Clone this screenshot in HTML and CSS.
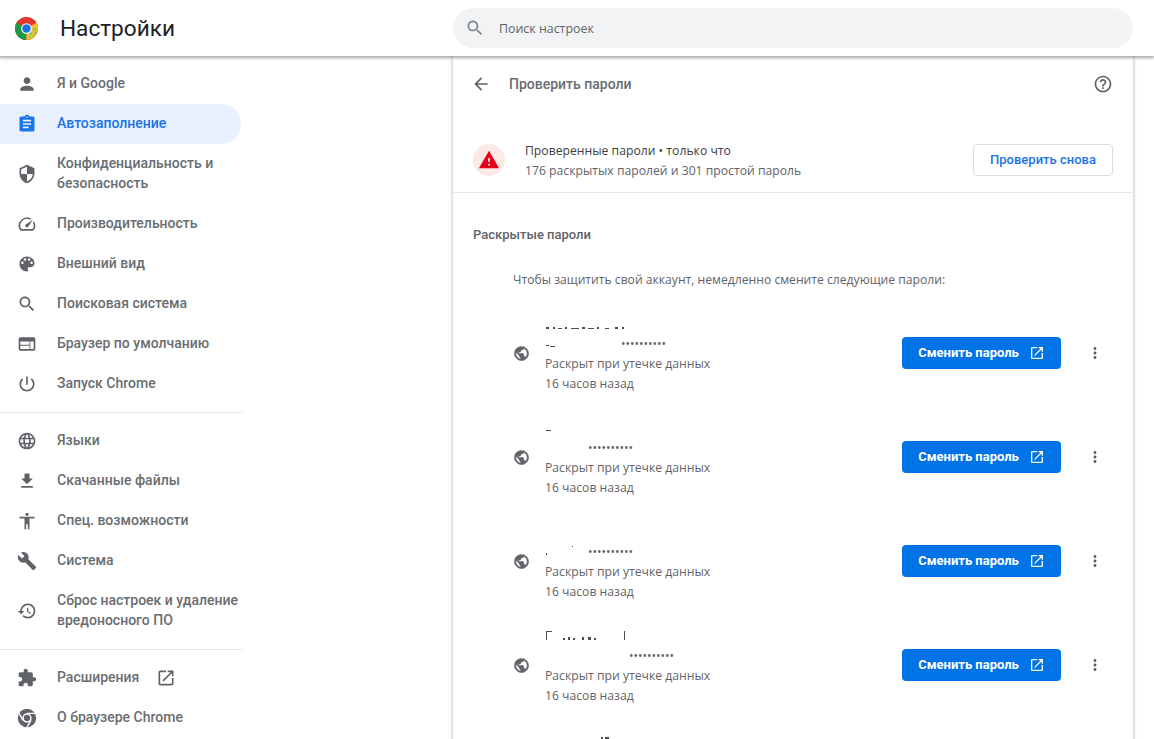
FILE: index.html
```html
<!DOCTYPE html>
<html lang="ru">
<head>
  <meta charset="UTF-8">
  <meta name="viewport" content="width=device-width, initial-scale=1.0">
  <title>Настройки</title>
  <link rel="stylesheet" href="styles.css">
</head>
<body>

  <!-- Toolbar -->
  <header class="toolbar">
    <div class="brand">
      <svg class="logo" viewBox="0 0 24 24">
        <circle cx="12" cy="12" r="12" fill="#e0352b"/>
        <path d="M12 12L1.6 18A12 12 0 0 0 12 24z" fill="#1e9a47"/>
        <path d="M12 12L1.6 18A12 12 0 0 1 1.6 6z" fill="#1e9a47"/>
        <path d="M12 12L12 24A12 12 0 0 0 22.4 6z" fill="#f5c02c"/>
        <path d="M15 17l2-1 1 1-2 2zM19 12l3 0 0 2-3 0zM14 21l2-1 1 1-2 1zM20 16l2-1 0 2-1 1zM18 20l2-1 0 1-1 1z" fill="#3fd08a"/>
        <circle cx="12" cy="12" r="5.6" fill="#fff"/>
        <circle cx="12" cy="12" r="4.4" fill="#1a73e8"/>
      </svg>
      <h1>Настройки</h1>
    </div>
    <div class="search">
      <svg class="icon search-icon" viewBox="0 0 24 24"><path d="M15.5 14h-.79l-.28-.27C15.41 12.59 16 11.11 16 9.5 16 5.91 13.09 3 9.5 3S3 5.91 3 9.5 5.91 16 9.5 16c1.61 0 3.09-.59 4.23-1.57l.27.28v.79l5 4.99L20.49 19l-4.99-5zm-6 0C7.01 14 5 11.99 5 9.5S7.01 5 9.5 5 14 7.01 14 9.5 11.99 14 9.5 14z"/></svg>
      <span>Поиск настроек</span>
    </div>
  </header>

  <div class="layout">

    <!-- Sidebar -->
    <nav class="sidebar">
      <a class="nav-item">
        <svg class="icon" viewBox="0 0 24 24"><path d="M12 12c2.21 0 4-1.79 4-4s-1.79-4-4-4-4 1.79-4 4 1.79 4 4 4zm0 2c-2.67 0-8 1.34-8 4v2h16v-2c0-2.66-5.33-4-8-4z"/></svg>
        <span>Я и Google</span>
      </a>
      <a class="nav-item active">
        <svg class="icon" viewBox="0 0 24 24"><path d="M19 3h-4.18C14.4 1.84 13.3 1 12 1c-1.3 0-2.4.84-2.82 2H5c-1.1 0-2 .9-2 2v14c0 1.1.9 2 2 2h14c1.1 0 2-.9 2-2V5c0-1.1-.9-2-2-2zm-7 0c.55 0 1 .45 1 1s-.45 1-1 1-1-.45-1-1 .45-1 1-1zm2 14H7v-2h7v2zm3-4H7v-2h10v2zm0-4H7V7h10v2z"/></svg>
        <span>Автозаполнение</span>
      </a>
      <a class="nav-item tall">
        <svg class="icon" viewBox="0 0 24 24"><path d="M12 1L3 5v6c0 5.55 3.84 10.74 9 12 5.16-1.26 9-6.45 9-12V5l-9-4zm0 10.99h7c-.53 4.12-3.28 7.79-7 8.94V12H5V6.3l7-3.11v8.8z"/></svg>
        <span>Конфиденциальность и безопасность</span>
      </a>
      <a class="nav-item">
        <svg class="icon" viewBox="0 0 24 24"><path d="M20.38 8.57l-1.23 1.85a8 8 0 0 1-.22 7.58H5.07A8 8 0 0 1 15.58 6.85l1.85-1.23A10 10 0 0 0 3.35 19a2 2 0 0 0 1.72 1h13.85a2 2 0 0 0 1.74-1 10 10 0 0 0-.27-10.44zm-9.79 6.84a2 2 0 0 0 2.83 0l5.66-8.49-8.49 5.66a2 2 0 0 0 0 2.83z"/></svg>
        <span>Производительность</span>
      </a>
      <a class="nav-item">
        <svg class="icon" viewBox="0 0 24 24"><path d="M12 3c-4.97 0-9 4.03-9 9s4.03 9 9 9c.83 0 1.5-.67 1.5-1.5 0-.39-.15-.74-.39-1.01-.23-.26-.38-.61-.38-.99 0-.83.67-1.5 1.5-1.5H16c2.76 0 5-2.24 5-5 0-4.42-4.03-8-9-8zm-5.5 9c-.83 0-1.5-.67-1.5-1.5S5.67 9 6.5 9 8 9.67 8 10.5 7.33 12 6.5 12zm3-4C8.67 8 8 7.33 8 6.5S8.67 5 9.5 5s1.5.67 1.5 1.5S10.33 8 9.5 8zm5 0c-.83 0-1.5-.67-1.5-1.5S13.67 5 14.5 5s1.5.67 1.5 1.5S15.33 8 14.5 8zm3 4c-.83 0-1.5-.67-1.5-1.5S16.67 9 17.5 9s1.5.67 1.5 1.5-.67 1.5-1.5 1.5z"/></svg>
        <span>Внешний вид</span>
      </a>
      <a class="nav-item">
        <svg class="icon" viewBox="0 0 24 24"><path d="M15.5 14h-.79l-.28-.27C15.41 12.59 16 11.11 16 9.5 16 5.91 13.09 3 9.5 3S3 5.91 3 9.5 5.91 16 9.5 16c1.61 0 3.09-.59 4.23-1.57l.27.28v.79l5 4.99L20.49 19l-4.99-5zm-6 0C7.01 14 5 11.99 5 9.5S7.01 5 9.5 5 14 7.01 14 9.5 11.99 14 9.5 14z"/></svg>
        <span>Поисковая система</span>
      </a>
      <a class="nav-item">
        <svg class="icon" viewBox="0 0 24 24"><path d="M20 4H4c-1.1 0-1.99.9-1.99 2L2 18c0 1.1.9 2 2 2h16c1.1 0 2-.9 2-2V6c0-1.1-.9-2-2-2zm-5 14H4v-4h11v4zm0-5H4V9h11v4zm5 5h-4V9h4v9z"/></svg>
        <span>Браузер по умолчанию</span>
      </a>
      <a class="nav-item">
        <svg class="icon" viewBox="0 0 24 24"><path d="M13 3h-2v10h2V3zm4.83 2.17l-1.42 1.42C17.99 7.86 19 9.81 19 12c0 3.87-3.13 7-7 7s-7-3.13-7-7c0-2.19 1.01-4.14 2.58-5.42L6.17 5.17C4.23 6.82 3 9.26 3 12c0 4.97 4.03 9 9 9s9-4.03 9-9c0-2.74-1.23-5.18-3.17-6.83z"/></svg>
        <span>Запуск Chrome</span>
      </a>

      <div class="nav-sep"></div>

      <a class="nav-item">
        <svg class="icon" viewBox="0 0 24 24"><path d="M11.99 2C6.47 2 2 6.48 2 12s4.47 10 9.99 10C17.52 22 22 17.52 22 12S17.52 2 11.99 2zm6.93 6h-2.95c-.32-1.25-.78-2.45-1.38-3.56 1.84.63 3.37 1.91 4.33 3.56zM12 4.04c.83 1.2 1.48 2.53 1.91 3.96h-3.82c.43-1.43 1.08-2.76 1.91-3.96zM4.26 14C4.1 13.36 4 12.69 4 12s.1-1.36.26-2h3.38c-.08.66-.14 1.32-.14 2 0 .68.06 1.34.14 2H4.26zm.82 2h2.95c.32 1.25.78 2.45 1.38 3.56-1.84-.63-3.37-1.9-4.33-3.56zm2.95-8H5.08c.96-1.66 2.49-2.93 4.33-3.56C8.81 5.55 8.35 6.75 8.03 8zM12 19.96c-.83-1.2-1.48-2.53-1.91-3.96h3.82c-.43 1.43-1.08 2.76-1.91 3.96zM14.34 14H9.66c-.09-.66-.16-1.32-.16-2 0-.68.07-1.35.16-2h4.68c.09.65.16 1.32.16 2 0 .68-.07 1.34-.16 2zm.25 5.56c.6-1.11 1.06-2.31 1.38-3.56h2.95c-.96 1.65-2.49 2.93-4.33 3.56zM16.36 14c.08-.66.14-1.32.14-2 0-.68-.06-1.34-.14-2h3.38c.16.64.26 1.31.26 2s-.1 1.36-.26 2h-3.38z"/></svg>
        <span>Языки</span>
      </a>
      <a class="nav-item">
        <svg class="icon" viewBox="0 0 24 24"><path d="M19 9h-4V3H9v6H5l7 7 7-7zM5 18v2h14v-2H5z"/></svg>
        <span>Скачанные файлы</span>
      </a>
      <a class="nav-item">
        <svg class="icon" viewBox="0 0 24 24"><path d="M12 2c1.1 0 2 .9 2 2s-.9 2-2 2-2-.9-2-2 .9-2 2-2zm9 7h-6v13h-2v-6h-2v6H9V9H3V7h18v2z"/></svg>
        <span>Спец. возможности</span>
      </a>
      <a class="nav-item">
        <svg class="icon" viewBox="0 0 24 24"><path d="M22.7 19l-9.1-9.1c.9-2.3.4-5-1.5-6.9-2-2-5-2.4-7.4-1.3L9 6 6 9 1.6 4.7C.4 7.1.9 10.1 2.9 12.1c1.9 1.9 4.6 2.4 6.9 1.5l9.1 9.1c.4.4 1 .4 1.4 0l2.3-2.3c.5-.4.5-1.1.1-1.4z"/></svg>
        <span>Система</span>
      </a>
      <a class="nav-item tall">
        <svg class="icon" viewBox="0 0 24 24"><path d="M13 3c-4.97 0-9 4.03-9 9H1l3.89 3.89.07.14L9 12H6c0-3.87 3.13-7 7-7s7 3.13 7 7-3.13 7-7 7c-1.93 0-3.68-.79-4.94-2.06l-1.42 1.42C8.27 19.99 10.51 21 13 21c4.97 0 9-4.03 9-9s-4.03-9-9-9zm-1 5v5l4.28 2.54.72-1.21-3.5-2.08V8H12z"/></svg>
        <span>Сброс настроек и удаление вредоносного ПО</span>
      </a>

      <div class="nav-sep"></div>

      <a class="nav-item">
        <svg class="icon" viewBox="0 0 24 24"><path d="M20.5 11H19V7c0-1.1-.9-2-2-2h-4V3.5C13 2.12 11.88 1 10.5 1S8 2.12 8 3.5V5H4c-1.1 0-1.99.9-1.99 2v3.8H3.5c1.49 0 2.7 1.21 2.7 2.7s-1.21 2.7-2.7 2.7H2V20c0 1.1.9 2 2 2h3.8v-1.5c0-1.49 1.21-2.7 2.7-2.7 1.49 0 2.7 1.21 2.7 2.7V22H17c1.1 0 2-.9 2-2v-4h1.5c1.38 0 2.5-1.12 2.5-2.5S21.88 11 20.5 11z"/></svg>
        <span>Расширения</span>
        <svg class="icon ext-link" viewBox="0 0 24 24"><path d="M19 19H5V5h7V3H5c-1.11 0-2 .9-2 2v14c0 1.1.89 2 2 2h14c1.1 0 2-.9 2-2v-7h-2v7zM14 3v2h3.59l-9.83 9.83 1.41 1.41L19 6.41V10h2V3h-7z"/></svg>
      </a>
      <a class="nav-item">
        <svg class="icon" viewBox="0 0 24 24">
          <circle cx="12" cy="12" r="11"/>
          <circle class="cut" cx="12" cy="12" r="5.6"/>
          <circle cx="12" cy="12" r="3.8"/>
          <path class="swirl" d="M12 6.4H21.5M7.2 14.8L2.6 6.6M16.8 14.8L12 23"/>
        </svg>
        <span>О браузере Chrome</span>
      </a>
    </nav>

    <!-- Password check card -->
    <main class="card">
      <div class="card-head">
        <svg class="icon head-icon" viewBox="0 0 24 24"><path d="M20 11H7.83l5.59-5.59L12 4l-8 8 8 8 1.41-1.41L7.83 13H20v-2z"/></svg>
        <h2>Проверить пароли</h2>
        <svg class="icon help-icon" viewBox="0 0 24 24"><path d="M11 18h2v-2h-2v2zm1-16C6.48 2 2 6.48 2 12s4.48 10 10 10 10-4.48 10-10S17.52 2 12 2zm0 18c-4.41 0-8-3.59-8-8s3.59-8 8-8 8 3.59 8 8-3.59 8-8 8zm0-14c-2.21 0-4 1.79-4 4h2c0-1.1.9-2 2-2s2 .9 2 2c0 2-3 1.75-3 5h2c0-2.25 3-2.5 3-5 0-2.21-1.79-4-4-4z"/></svg>
      </div>

      <div class="status">
        <div class="status-badge">
          <svg viewBox="0 0 24 24"><path d="M1 21h22L12 2 1 21zm12-3h-2v-2h2v2zm0-4h-2v-4h2v4z"/></svg>
        </div>
        <div class="status-text">
          <div class="status-title">Проверенные пароли • только что</div>
          <div>176 раскрытых паролей и 301 простой пароль</div>
        </div>
        <button class="btn-outline">Проверить снова</button>
      </div>

      <h3 class="section-title">Раскрытые пароли</h3>
      <p class="section-note">Чтобы защитить свой аккаунт, немедленно смените следующие пароли:</p>

      <div class="row">
        <svg class="icon globe" viewBox="0 0 24 24"><path d="M12 2C6.48 2 2 6.48 2 12s4.48 10 10 10 10-4.48 10-10S17.52 2 12 2zm-1 17.93c-3.95-.49-7-3.85-7-7.93 0-.62.08-1.21.21-1.79L9 15v1c0 1.1.9 2 2 2v1.93zm6.9-2.54c-.26-.81-1-1.39-1.9-1.39h-1v-3c0-.55-.45-1-1-1H8v-2h2c.55 0 1-.45 1-1V7h2c1.1 0 2-.9 2-2v-.41c2.93 1.19 5 4.06 5 7.41 0 2.08-.8 3.97-2.1 5.39z"/></svg>
        <div class="row-text">
          <!-- site and login are painted out in the source, only scraps remain -->
          <div class="line site">
            <svg class="scraps" width="90" height="20"><path d="M1 13h3v2H1zM8 13h2v2H8zM13 14h4v1h-4zM20 13h2v2h-2zM26 14h8v1h-8zM37 13h3v2h-3zM43 14h6v1h-6zM52 13h2v2h-2zM60 14h4v1h-4zM70 13h3v2h-3zM77 13h2v2h-2z"/></svg>
          </div>
          <div class="line login">
            <svg class="scraps" width="12" height="20"><path d="M1 11h3v1H1zM5 12h5v1H5z"/></svg>
            <span class="dots offset-76">••••••••••</span>
          </div>
          <div class="line">Раскрыт при утечке данных</div>
          <div class="line">16 часов назад</div>
        </div>
        <button class="btn-change">Сменить пароль
          <svg viewBox="0 0 24 24"><path d="M19 19H5V5h7V3H5c-1.11 0-2 .9-2 2v14c0 1.1.89 2 2 2h14c1.1 0 2-.9 2-2v-7h-2v7zM14 3v2h3.59l-9.83 9.83 1.41 1.41L19 6.41V10h2V3h-7z"/></svg>
        </button>
        <svg class="icon more" viewBox="0 0 24 24"><path d="M12 8c1.1 0 2-.9 2-2s-.9-2-2-2-2 .9-2 2 .9 2 2 2zm0 2c-1.1 0-2 .9-2 2s.9 2 2 2 2-.9 2-2-.9-2-2-2zm0 6c-1.1 0-2 .9-2 2s.9 2 2 2 2-.9 2-2-.9-2-2-2z"/></svg>
      </div>

      <div class="row">
        <svg class="icon globe" viewBox="0 0 24 24"><path d="M12 2C6.48 2 2 6.48 2 12s4.48 10 10 10 10-4.48 10-10S17.52 2 12 2zm-1 17.93c-3.95-.49-7-3.85-7-7.93 0-.62.08-1.21.21-1.79L9 15v1c0 1.1.9 2 2 2v1.93zm6.9-2.54c-.26-.81-1-1.39-1.9-1.39h-1v-3c0-.55-.45-1-1-1H8v-2h2c.55 0 1-.45 1-1V7h2c1.1 0 2-.9 2-2v-.41c2.93 1.19 5 4.06 5 7.41 0 2.08-.8 3.97-2.1 5.39z"/></svg>
        <div class="row-text">
          <div class="line site">
            <svg class="scraps" width="12" height="20"><path d="M1 12h5v1H1z"/></svg>
          </div>
          <div class="line login"><span class="dots offset-43">••••••••••</span></div>
          <div class="line">Раскрыт при утечке данных</div>
          <div class="line">16 часов назад</div>
        </div>
        <button class="btn-change">Сменить пароль
          <svg viewBox="0 0 24 24"><path d="M19 19H5V5h7V3H5c-1.11 0-2 .9-2 2v14c0 1.1.89 2 2 2h14c1.1 0 2-.9 2-2v-7h-2v7zM14 3v2h3.59l-9.83 9.83 1.41 1.41L19 6.41V10h2V3h-7z"/></svg>
        </button>
        <svg class="icon more" viewBox="0 0 24 24"><path d="M12 8c1.1 0 2-.9 2-2s-.9-2-2-2-2 .9-2 2 .9 2 2 2zm0 2c-1.1 0-2 .9-2 2s.9 2 2 2 2-.9 2-2-.9-2-2-2zm0 6c-1.1 0-2 .9-2 2s.9 2 2 2 2-.9 2-2-.9-2-2-2z"/></svg>
      </div>

      <div class="row">
        <svg class="icon globe" viewBox="0 0 24 24"><path d="M12 2C6.48 2 2 6.48 2 12s4.48 10 10 10 10-4.48 10-10S17.52 2 12 2zm-1 17.93c-3.95-.49-7-3.85-7-7.93 0-.62.08-1.21.21-1.79L9 15v1c0 1.1.9 2 2 2v1.93zm6.9-2.54c-.26-.81-1-1.39-1.9-1.39h-1v-3c0-.55-.45-1-1-1H8v-2h2c.55 0 1-.45 1-1V7h2c1.1 0 2-.9 2-2v-.41c2.93 1.19 5 4.06 5 7.41 0 2.08-.8 3.97-2.1 5.39z"/></svg>
        <div class="row-text">
          <div class="line site"></div>
          <div class="line login">
            <svg class="scraps" width="32" height="20"><path d="M27 4h1v1h-1zM1 11h1v2H1z"/></svg>
            <span class="dots offset-43">••••••••••</span>
          </div>
          <div class="line">Раскрыт при утечке данных</div>
          <div class="line">16 часов назад</div>
        </div>
        <button class="btn-change">Сменить пароль
          <svg viewBox="0 0 24 24"><path d="M19 19H5V5h7V3H5c-1.11 0-2 .9-2 2v14c0 1.1.89 2 2 2h14c1.1 0 2-.9 2-2v-7h-2v7zM14 3v2h3.59l-9.83 9.83 1.41 1.41L19 6.41V10h2V3h-7z"/></svg>
        </button>
        <svg class="icon more" viewBox="0 0 24 24"><path d="M12 8c1.1 0 2-.9 2-2s-.9-2-2-2-2 .9-2 2 .9 2 2 2zm0 2c-1.1 0-2 .9-2 2s.9 2 2 2 2-.9 2-2-.9-2-2-2zm0 6c-1.1 0-2 .9-2 2s.9 2 2 2 2-.9 2-2-.9-2-2-2z"/></svg>
      </div>

      <div class="row">
        <svg class="icon globe" viewBox="0 0 24 24"><path d="M12 2C6.48 2 2 6.48 2 12s4.48 10 10 10 10-4.48 10-10S17.52 2 12 2zm-1 17.93c-3.95-.49-7-3.85-7-7.93 0-.62.08-1.21.21-1.79L9 15v1c0 1.1.9 2 2 2v1.93zm6.9-2.54c-.26-.81-1-1.39-1.9-1.39h-1v-3c0-.55-.45-1-1-1H8v-2h2c.55 0 1-.45 1-1V7h2c1.1 0 2-.9 2-2v-.41c2.93 1.19 5 4.06 5 7.41 0 2.08-.8 3.97-2.1 5.39z"/></svg>
        <div class="row-text">
          <div class="line site">
            <svg class="scraps" width="90" height="20"><path d="M1 5h6v1H1zM1 5h1v9H1zM18 12h2v2h-2zM23 11h2v3h-2zM28 12h2v2h-2zM37 11h2v3h-2zM43 11h3v3h-3zM49 12h2v2h-2zM79 5h1v9h-1z"/></svg>
          </div>
          <div class="line login"><span class="dots offset-84">••••••••••</span></div>
          <div class="line">Раскрыт при утечке данных</div>
          <div class="line">16 часов назад</div>
        </div>
        <button class="btn-change">Сменить пароль
          <svg viewBox="0 0 24 24"><path d="M19 19H5V5h7V3H5c-1.11 0-2 .9-2 2v14c0 1.1.89 2 2 2h14c1.1 0 2-.9 2-2v-7h-2v7zM14 3v2h3.59l-9.83 9.83 1.41 1.41L19 6.41V10h2V3h-7z"/></svg>
        </button>
        <svg class="icon more" viewBox="0 0 24 24"><path d="M12 8c1.1 0 2-.9 2-2s-.9-2-2-2-2 .9-2 2 .9 2 2 2zm0 2c-1.1 0-2 .9-2 2s.9 2 2 2 2-.9 2-2-.9-2-2-2zm0 6c-1.1 0-2 .9-2 2s.9 2 2 2 2-.9 2-2-.9-2-2-2z"/></svg>
      </div>

      <div class="row-tail">
        <svg class="scraps" width="70" height="6"><path d="M56 0h2v2h-2zM60 0h4v2h-4z"/></svg>
      </div>
    </main>
  </div>

</body>
</html>
```

FILE: styles.css
```css
/* General */
html, body {
  height: 100%;
}

body {
  margin: 0;
  background: #ffffff;
  color: #5f6368;
  font-family: Roboto, Arial, sans-serif;
  font-size: 13px;
  overflow: hidden;
}

.icon {
  width: 20px;
  height: 20px;
  flex: none;
  fill: #5f6368;
}

/* Toolbar */
.toolbar {
  position: relative;
  z-index: 5;
  display: flex;
  align-items: center;
  height: 56px;
  background: #ffffff;
  box-shadow: 0 1px 3px 1px rgba(60, 64, 67, 0.45);
}

.brand {
  display: flex;
  align-items: center;
  width: 453px;
  padding-left: 15px;
  box-sizing: border-box;
}

.logo {
  width: 23px;
  height: 23px;
  flex: none;
}

.brand h1 {
  margin: 0 0 0 22px;
  color: #202124;
  font-size: 22.6px;
  font-weight: 400;
}

.search {
  display: flex;
  align-items: center;
  width: 680px;
  height: 40px;
  border-radius: 20px;
  background: #f1f3f4;
  color: #5f6368;
  font-family: "Open Sans", Arial, sans-serif;
  font-size: 12.4px;
}

.search-icon {
  margin: 0 14px 0 12px;
  fill: #80868b;
}

/* Sidebar */
.layout {
  display: flex;
  align-items: flex-start;
}

.sidebar {
  flex: none;
  width: 243px;
  padding-top: 8px;
  color: #696d71;
  font-size: 14px;
  font-weight: 500;
}

.nav-item {
  display: flex;
  align-items: center;
  gap: 20px;
  width: 241px;
  height: 40px;
  padding-left: 17px;
  box-sizing: border-box;
  border-radius: 0 20px 20px 0;
  line-height: 20px;
}

.nav-item span {
  margin-top: -2px;
}

.nav-item.tall {
  height: 60px;
}

.nav-item.active {
  background: #e8f0fe;
  color: #1a73e8;
}

.nav-item.active .icon {
  fill: #1a73e8;
}

.nav-sep {
  height: 1px;
  margin: 8px 0;
  background: #e6e7e9;
}

.ext-link {
  margin-left: -3px;
}

.cut {
  fill: #ffffff;
}

.swirl {
  fill: none;
  stroke: #ffffff;
  stroke-width: 1.6;
}

/* Card */
.card {
  flex: none;
  width: 680px;
  height: 700px;
  margin-left: 210px;
  box-shadow: 0 0 3px 1px rgba(60, 64, 67, 0.28);
  font-family: "Open Sans", Arial, sans-serif;
  font-size: 12.2px;
}

.card-head {
  display: flex;
  align-items: center;
  height: 56px;
  padding: 0 20px 0 18px;
  color: #696d71;
  font-family: Roboto, Arial, sans-serif;
}

.card-head h2 {
  flex: 1;
  margin: 0 0 0 18px;
  font-size: 14px;
  font-weight: 500;
}

.help-icon {
  fill: #5f6368;
}

/* Status row */
.status {
  display: flex;
  align-items: center;
  height: 69px;
  padding: 4px 20px 0;
  box-sizing: border-box;
  margin-top: 12px;
  border-bottom: 1px solid #e6e7e9;
  line-height: 20px;
}

.status-badge {
  display: flex;
  align-items: center;
  justify-content: center;
  width: 32px;
  height: 32px;
  flex: none;
  border-radius: 50%;
  background: #fce8e6;
}

.status-badge svg {
  width: 22px;
  height: 22px;
  fill: #e8001c;
}

.status-text {
  flex: 1;
  margin: 2px 0 0 20px;
}

.status-title {
  color: #3c4043;
}

.btn-outline {
  width: 140px;
  height: 32px;
  padding: 0 0 2px;
  border: 1px solid #dadce0;
  border-radius: 4px;
  background: #ffffff;
  color: #1a73e8;
  font-family: Roboto, Arial, sans-serif;
  font-size: 13px;
  font-weight: 500;
}

/* Exposed passwords */
.section-title {
  margin: 32px 0 0 20px;
  font-family: Roboto, Arial, sans-serif;
  font-size: 13px;
  font-weight: 500;
  line-height: 20px;
}

.section-note {
  margin: 25px 0 11px 60px;
  font-size: 12.15px;
  line-height: 20px;
}

.row {
  display: flex;
  align-items: center;
  height: 104px;
  padding-left: 60px;
}

.globe {
  width: 17px;
  height: 17px;
  margin-right: -1px;
  stroke: #5f6368;
  stroke-width: 0.7;
}

.row-text {
  flex: 1;
  margin: 2px 0 0 16px;
}

.line {
  height: 20px;
  line-height: 20px;
  white-space: nowrap;
}

.login {
  position: relative;
}

.scraps {
  display: block;
  fill: #4a4e52;
}

/* login is painted out, so the dots sit where its text ended */
.dots {
  position: absolute;
  top: 0;
  font-size: 12px;
  color: #5f6368;
}

.offset-76 { left: 76px; }
.offset-43 { left: 43px; }
.offset-84 { left: 84px; }

.login .scraps {
  position: absolute;
  top: 0;
  left: 0;
}

.btn-change {
  display: flex;
  align-items: center;
  justify-content: center;
  gap: 10px;
  width: 159px;
  height: 32px;
  padding: 0 0 2px;
  border: none;
  border-radius: 4px;
  background: #0073e6;
  color: #ffffff;
  font-family: Roboto, Arial, sans-serif;
  font-size: 13px;
  font-weight: 700;
}

.btn-change svg {
  width: 16px;
  height: 16px;
  margin-top: 2px;
  fill: #ffffff;
}

.more {
  width: 18px;
  height: 18px;
  margin: 0 29px 0 25px;
}

.row-tail {
  padding: 20px 0 0 92px;
}
```
